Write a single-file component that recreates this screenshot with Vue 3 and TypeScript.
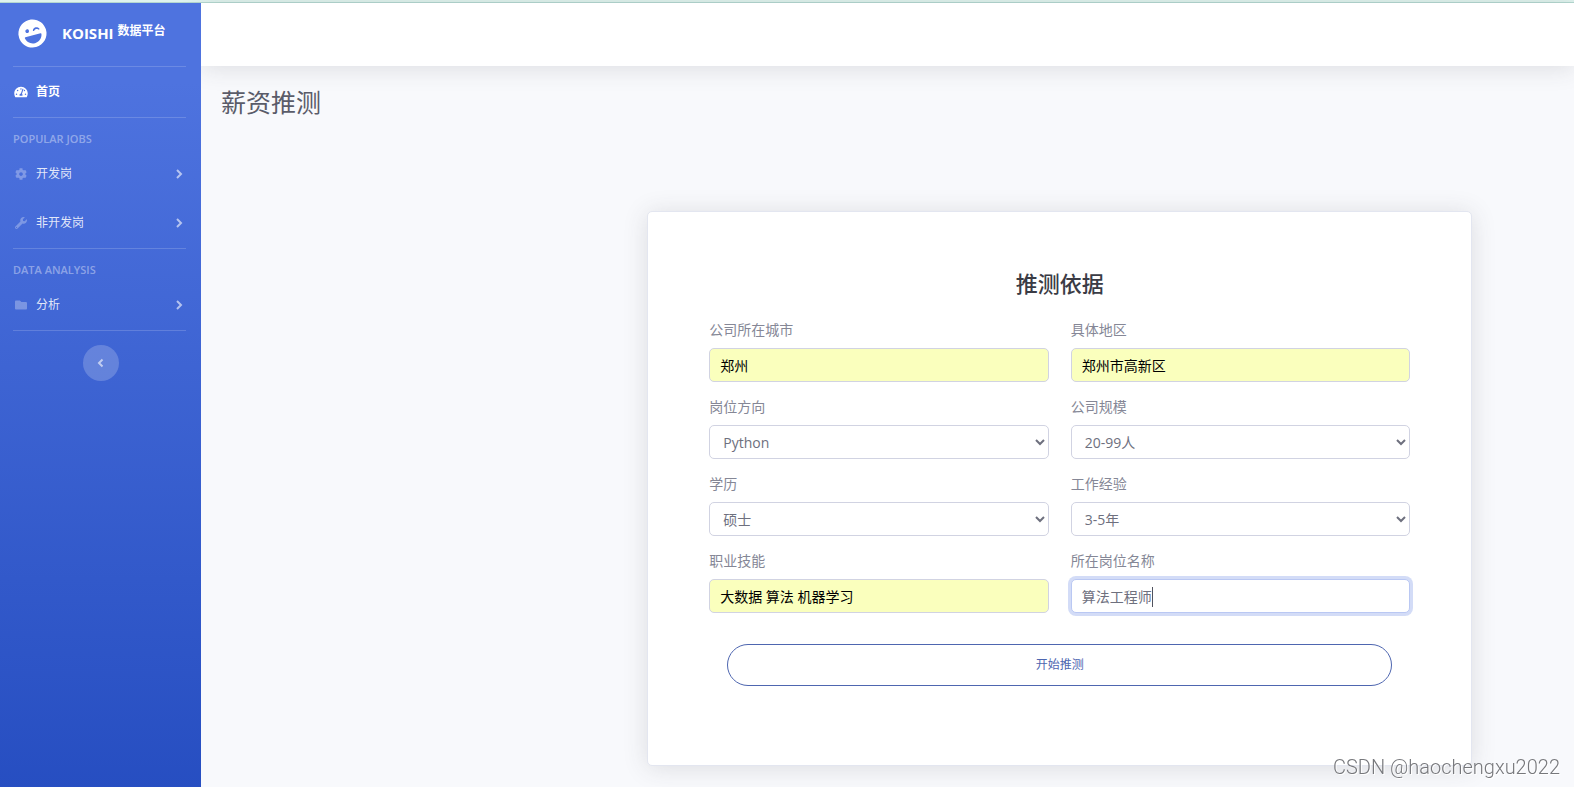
<script setup lang="ts">
import { onMounted, reactive, ref } from 'vue'

interface NavItem {
  label: string
  viewBox: string
  path: string
}

interface NavSection {
  title: string
  items: NavItem[]
}

interface Field {
  id: string
  label: string
  kind: 'text' | 'select'
  options?: string[]
  filled?: boolean
}

const sections: NavSection[] = [
  {
    title: 'POPULAR JOBS',
    items: [
      {
        label: '开发岗',
        viewBox: '0 0 512 512',
        path: 'M487.4 315.7l-42.6-24.6c4.3-23.2 4.3-47 0-70.2l42.6-24.6c4.9-2.8 7.1-8.6 5.5-14-11.1-35.6-30-67.8-54.7-94.6-3.8-4.1-10-5.1-14.8-2.3L380.8 110c-17.9-15.4-38.5-27.3-60.8-35.1V25.8c0-5.6-3.9-10.5-9.4-11.7-36.7-8.2-74.3-7.8-109.2 0-5.5 1.2-9.4 6.1-9.4 11.7V75c-22.2 7.9-42.8 19.8-60.8 35.1L88.7 85.5c-4.9-2.8-11-1.9-14.8 2.3-24.7 26.7-43.6 58.9-54.7 94.6-1.7 5.4.6 11.2 5.5 14L67.3 221c-4.3 23.2-4.3 47 0 70.2l-42.6 24.6c-4.9 2.8-7.1 8.6-5.5 14 11.1 35.6 30 67.8 54.7 94.6 3.8 4.1 10 5.1 14.8 2.3l42.6-24.6c17.9 15.4 38.5 27.3 60.8 35.1v49.2c0 5.6 3.9 10.5 9.4 11.7 36.7 8.2 74.3 7.8 109.2 0 5.5-1.2 9.4-6.1 9.4-11.7v-49.2c22.2-7.9 42.8-19.8 60.8-35.1l42.6 24.6c4.9 2.8 11 1.9 14.8-2.3 24.7-26.7 43.6-58.9 54.7-94.6 1.5-5.5-.7-11.3-5.6-14.1zM256 336c-44.1 0-80-35.9-80-80s35.9-80 80-80 80 35.9 80 80-35.9 80-80 80z',
      },
      {
        label: '非开发岗',
        viewBox: '0 0 512 512',
        path: 'M507.73 109.1c-2.24-9.03-13.54-12.09-20.12-5.51l-74.36 74.36-67.88-11.31-11.31-67.88 74.36-74.36c6.62-6.62 3.43-17.9-5.66-20.16-47.38-11.74-99.55.91-136.58 37.93-39.64 39.64-50.55 97.1-34.05 147.2L18.74 402.76c-24.99 24.99-24.99 65.51 0 90.5 24.99 24.99 65.51 24.99 90.5 0l213.21-213.21c50.12 16.71 107.47 5.68 147.37-34.22 37.07-37.07 49.7-89.32 37.91-136.73zM64 472c-13.25 0-24-10.75-24-24 0-13.26 10.75-24 24-24s24 10.74 24 24c0 13.25-10.75 24-24 24z',
      },
    ],
  },
  {
    title: 'DATA ANALYSIS',
    items: [
      {
        label: '分析',
        viewBox: '0 0 512 512',
        path: 'M464 128H272l-64-64H48C21.49 64 0 85.49 0 112v288c0 26.51 21.49 48 48 48h416c26.51 0 48-21.49 48-48V176c0-26.51-21.49-48-48-48z',
      },
    ],
  },
]

const fields: Field[] = [
  { id: 'city', label: '公司所在城市', kind: 'text', filled: true },
  { id: 'district', label: '具体地区', kind: 'text', filled: true },
  { id: 'direction', label: '岗位方向', kind: 'select', options: ['Python', 'Java', 'C++'] },
  { id: 'scale', label: '公司规模', kind: 'select', options: ['20-99人', '100-499人', '500-999人'] },
  { id: 'education', label: '学历', kind: 'select', options: ['硕士', '本科', '大专'] },
  { id: 'experience', label: '工作经验', kind: 'select', options: ['3-5年', '1-3年', '5-10年'] },
  { id: 'skills', label: '职业技能', kind: 'text', filled: true },
  { id: 'position', label: '所在岗位名称', kind: 'text' },
]

const form = reactive<Record<string, string>>({
  city: '郑州',
  district: '郑州市高新区',
  direction: 'Python',
  scale: '20-99人',
  education: '硕士',
  experience: '3-5年',
  skills: '大数据 算法 机器学习',
  position: '算法工程师',
})

const formEl = ref<HTMLFormElement | null>(null)

onMounted(() => {
  const input = formEl.value?.querySelector<HTMLInputElement>('#position')
  input?.focus()
  input?.setSelectionRange(input.value.length, input.value.length)
})
</script>

<template>
  <div class="page">
    <div class="strip"></div>
    <div class="shell">
      <nav class="sidebar">
        <a class="brand" href="#">
          <svg class="logo" viewBox="0 0 496 512" aria-hidden="true">
            <path
              fill="currentColor"
              d="M248 8C111 8 0 119 0 256s111 248 248 248 248-111 248-248S385 8 248 8zm20.1 198.1c4-25.2 34.2-42.1 59.9-42.1s55.9 16.9 59.9 42.1c1.7 11.1-11.4 18.3-19.8 10.8l-9.5-8.5c-14.8-13.2-46.2-13.2-61 0L288 217c-8.4 7.4-21.6.3-19.9-10.9zM168 160c17.7 0 32 14.3 32 32s-14.3 32-32 32-32-14.3-32-32 14.3-32 32-32zm230.9 143C390 374 325 432 248 432h-1.6c-77 0-142-58-151-129-1-8 5.200-15 13.200-15h277c8 0 14.200 7 13.300 15z"
            />
          </svg>
          <span class="brand-text">KOISHI <sup>数据平台</sup></span>
        </a>
        <hr />
        <a class="nav-link active" href="#">
          <svg class="nav-icon" viewBox="0 0 576 512" aria-hidden="true">
            <path
              fill="currentColor"
              d="M288 32C128.94 32 0 160.94 0 320c0 52.8 14.25 102.26 39.06 144.8 5.61 9.62 16.3 15.2 27.44 15.2h443c11.14 0 21.83-5.58 27.44-15.2C561.75 422.26 576 372.8 576 320c0-159.06-128.94-288-288-288zm0 64c14.71 0 26.58 10.13 30.32 23.65-1.11 2.26-2.64 4.23-3.45 6.67l-9.22 27.67c-5.13 3.49-10.97 6.01-17.64 6.01-17.67 0-32-14.33-32-32S270.33 96 288 96zM96 384c-17.67 0-32-14.33-32-32s14.33-32 32-32 32 14.33 32 32-14.33 32-32 32zm48-160c-17.67 0-32-14.33-32-32s14.33-32 32-32 32 14.33 32 32-14.33 32-32 32zm246.77-72.41l-61.33 184C343.13 347.33 352 364.54 352 384c0 11.72-3.38 22.55-8.88 32H232.88c-5.5-9.45-8.88-20.28-8.88-32 0-33.94 26.5-61.43 59.9-63.59l61.34-184.01c4.17-12.56 17.73-19.45 30.36-15.17 12.57 4.19 19.35 17.79 15.17 30.36zm14.66 57.2l15.52-46.55c3.47-1.29 7.13-2.23 11.05-2.23 17.67 0 32 14.33 32 32s-14.33 32-32 32c-11.38-.01-21.25-6.1-26.57-15.22zM480 384c-17.67 0-32-14.33-32-32s14.33-32 32-32 32 14.33 32 32-14.33 32-32 32z"
            />
          </svg>
          <span>首页</span>
        </a>
        <hr />
        <template v-for="section in sections" :key="section.title">
          <div class="heading">{{ section.title }}</div>
          <a v-for="item in section.items" :key="item.label" class="nav-link" href="#">
            <svg class="nav-icon" :viewBox="item.viewBox" aria-hidden="true">
              <path fill="currentColor" :d="item.path" />
            </svg>
            <span>{{ item.label }}</span>
            <svg class="chevron" viewBox="0 0 8 12" aria-hidden="true">
              <path d="M2 2l4 4-4 4" fill="none" stroke="currentColor" stroke-width="2" />
            </svg>
          </a>
          <hr />
        </template>
        <button class="toggle" type="button" aria-label="收起侧栏">
          <svg viewBox="0 0 8 12" aria-hidden="true">
            <path d="M5.500 2.500L2 6l3.500 3.500" fill="none" stroke="currentColor" stroke-width="2" />
          </svg>
        </button>
      </nav>

      <div class="content">
        <header class="topbar"></header>
        <main class="main">
          <h1>薪资推测</h1>
          <section class="card">
            <h2>推测依据</h2>
            <form ref="formEl" @submit.prevent>
              <div class="grid">
                <div v-for="field in fields" :key="field.id" class="field">
                  <label :for="field.id">{{ field.label }}</label>
                  <select v-if="field.kind === 'select'" :id="field.id" v-model="form[field.id]" class="control">
                    <option v-for="option in field.options" :key="option" :value="option">{{ option }}</option>
                  </select>
                  <div v-else class="input-wrap">
                    <input
                      :id="field.id"
                      v-model="form[field.id]"
                      type="text"
                      autocomplete="off"
                      class="control"
                      :class="{ filled: field.filled }"
                    />
                    <span class="caret" aria-hidden="true">
                      <span class="caret-text">{{ form[field.id] }}</span>
                    </span>
                  </div>
                </div>
              </div>
              <button class="submit" type="submit">开始推测</button>
            </form>
          </section>
        </main>
      </div>
    </div>
    <div class="watermark">CSDN @haochengxu2022</div>
  </div>
</template>

<style>
body {
  margin: 0;
  background: #f8f9fc;
}
</style>

<style scoped>
* {
  box-sizing: border-box;
}

.page {
  display: flex;
  flex-direction: column;
  min-height: 100vh;
  font-family: 'Open Sans', 'Noto Sans CJK SC', sans-serif;
  font-size: 14px;
  line-height: 22px;
  color: #858796;
}

.strip {
  height: 3px;
  background: #dff3ee;
  border-bottom: 1px solid #b4d8d0;
}

.shell {
  flex: 1;
  display: flex;
}

.sidebar {
  position: relative;
  z-index: 1;
  flex: none;
  width: 201px;
  padding-bottom: 20px;
  background: linear-gradient(180deg, #4e73df 10%, #224abe 110%);
  display: flex;
  flex-direction: column;
}

.sidebar hr {
  width: 173px;
  height: 1px;
  margin: 0 13px;
  border: 0;
  background: rgba(255, 255, 255, 0.17);
}

.brand {
  height: 63px;
  padding: 0 18px 3px;
  display: flex;
  align-items: center;
  gap: 15px;
  color: #fff;
  text-decoration: none;
}

.logo {
  width: 29px;
  height: 29px;
  transform: rotate(-15deg);
}

.brand-text {
  font-size: 15px;
  font-weight: 700;
  white-space: nowrap;
}

.brand-text sup {
  font-size: 12px;
  line-height: 0;
  vertical-align: 4px;
}

.nav-link {
  height: 49px;
  padding: 0 18px 0 14px;
  display: flex;
  align-items: center;
  font-size: 12px;
  line-height: 18px;
  color: rgba(255, 255, 255, 0.85);
  text-decoration: none;
}

.nav-link.active {
  height: 50px;
  color: #fff;
  font-weight: 700;
}

.nav-link:not(.active) + hr {
  margin-top: 1px;
}

.nav-icon {
  width: 14px;
  height: 12px;
  margin-right: 8px;
  color: rgba(255, 255, 255, 0.3);
}

.active .nav-icon {
  color: #fff;
}

.chevron {
  width: 8px;
  height: 12px;
  margin-left: auto;
  color: rgba(255, 255, 255, 0.6);
}

.heading {
  padding: 13px 13px 2px;
  font-size: 11px;
  line-height: 16px;
  font-weight: 600;
  color: rgba(255, 255, 255, 0.4);
}

.toggle {
  align-self: center;
  width: 36px;
  height: 36px;
  margin-top: 14px;
  padding: 0;
  border: 0;
  border-radius: 50%;
  background: rgba(255, 255, 255, 0.2);
  color: rgba(255, 255, 255, 0.6);
  display: flex;
  align-items: center;
  justify-content: center;
}

.toggle svg {
  width: 8px;
  height: 12px;
}

.content {
  flex: 1;
  min-width: 0;
}

.topbar {
  height: 63px;
  background: #fff;
  box-shadow: 0 2px 25px rgba(58, 59, 69, 0.15);
}

.main {
  padding: 20px 0;
}

h1 {
  margin: 0 20px;
  font-size: 25px;
  line-height: 32px;
  font-weight: 400;
  color: #5a5c69;
}

.card {
  width: 60.1%;
  margin: 93px 0 0 32.5%;
  padding: 55px 61px 79px;
  background: #fff;
  border: 1px solid #e3e6f0;
  border-radius: 5px;
  box-shadow: 0 2px 25px rgba(58, 59, 69, 0.15);
}

h2 {
  margin: 0 0 20px;
  font-size: 22px;
  line-height: 32px;
  font-weight: 500;
  text-align: center;
  color: #3a3b45;
}

.grid {
  display: grid;
  grid-template-columns: 1fr 1fr;
  gap: 14px 22px;
}

.field {
  display: flex;
  flex-direction: column;
  gap: 7px;
}

.field label {
  line-height: 22px;
}

.input-wrap {
  position: relative;
}

.control {
  display: block;
  width: 100%;
  height: 34px;
  padding: 0 10px;
  border: 1px solid #d1d3e2;
  border-radius: 5px;
  background: #fff;
  font-family: inherit;
  font-size: 14px;
  color: #6e707e;
  caret-color: transparent;
  outline: none;
}

select.control {
  padding: 0 0 0 9px;
}

.control.filled {
  background: #faffbd;
  color: #000;
}

.control:focus {
  border-color: #bac8f3;
  box-shadow: 0 0 0 3px rgba(78, 115, 223, 0.25);
}

.caret {
  position: absolute;
  top: 8px;
  left: 11px;
  height: 20px;
  border-right: 1px solid #50525e;
  pointer-events: none;
  visibility: hidden;
}

.caret-text {
  visibility: hidden;
  white-space: pre;
}

.control:focus + .caret {
  visibility: visible;
}

.submit {
  display: block;
  width: calc(100% - 36px);
  height: 42px;
  margin: 31px 18px 0;
  padding: 0 0 2px;
  border: 1px solid #4e66b0;
  border-radius: 21px;
  background: #fff;
  font-family: inherit;
  font-size: 12px;
  color: #4e66b0;
}

.watermark {
  position: fixed;
  right: 14px;
  bottom: 8px;
  font-family: Roboto, sans-serif;
  font-size: 20px;
  line-height: 24px;
  font-weight: 300;
  color: #77787c;
  text-shadow: 1px 1px 0 #fff;
  pointer-events: none;
}
</style>
